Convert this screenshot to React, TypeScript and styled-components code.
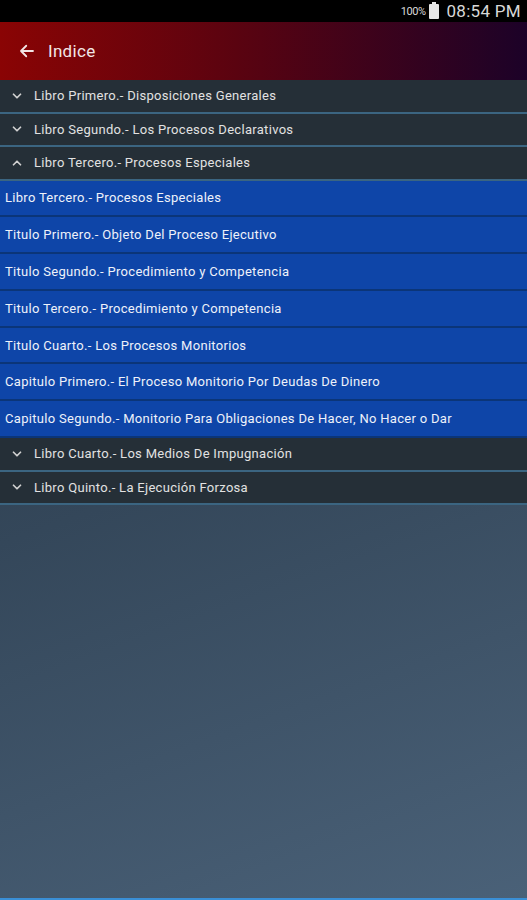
import React from 'react';
import styled, { createGlobalStyle } from 'styled-components';

const GlobalStyle = createGlobalStyle`
  html, body {
    margin: 0;
    padding: 0;
  }
  body {
    font-family: Roboto, "Liberation Sans", sans-serif;
    background: #2a3946;
  }
`;

type Group = {
  title: string;
  open?: boolean;
  items?: string[];
};

const groups: Group[] = [
  { title: 'Libro Primero.- Disposiciones Generales' },
  { title: 'Libro Segundo.- Los Procesos Declarativos' },
  {
    title: 'Libro Tercero.- Procesos Especiales',
    open: true,
    items: [
      'Libro Tercero.- Procesos Especiales',
      'Titulo Primero.- Objeto Del Proceso Ejecutivo',
      'Titulo Segundo.- Procedimiento y Competencia',
      'Titulo Tercero.- Procedimiento y Competencia',
      'Titulo Cuarto.- Los Procesos Monitorios',
      'Capitulo Primero.- El Proceso Monitorio Por Deudas De Dinero',
      'Capitulo Segundo.- Monitorio Para Obligaciones De Hacer, No Hacer o Dar',
    ],
  },
  { title: 'Libro Cuarto.- Los Medios De Impugnación' },
  { title: 'Libro Quinto.- La Ejecución Forzosa' },
];

const Screen = styled.div`
  width: 527px;
  height: 900px;
  display: flex;
  flex-direction: column;
  background: linear-gradient(160deg, #25323e 0%, #34475a 50%, #4a6178 100%);
  border-bottom: 2px solid #3a8fd6;
  box-sizing: border-box;
  overflow: hidden;
`;

const StatusBar = styled.div`
  height: 22px;
  flex-shrink: 0;
  background: #000;
  display: flex;
  justify-content: flex-end;
  align-items: center;
  gap: 4px;
  padding-right: 6px;
  color: #d8d8d8;
`;

const Battery = styled.span`
  width: 10px;
  height: 15px;
  background: #e6e6e6;
  border-radius: 1px;
  position: relative;
  margin-right: 3px;
  &::before {
    content: '';
    position: absolute;
    top: -2px;
    left: 3px;
    width: 4px;
    height: 2px;
    background: #e6e6e6;
  }
`;

const Percent = styled.span`
  font-size: 11px;
  letter-spacing: -0.5px;
`;

const Clock = styled.span`
  font-size: 17px;
  letter-spacing: 0.3px;
`;

const Header = styled.div`
  height: 58px;
  flex-shrink: 0;
  background: linear-gradient(90deg, #8a0404 0%, #5a0310 45%, #1c0228 100%);
  display: flex;
  align-items: center;
  padding-left: 18px;
  gap: 12px;
  color: #f2e6e6;
  box-shadow: 0 1px 2px rgba(0, 0, 0, 0.5);
`;

const Title = styled.span`
  font-size: 17px;
  letter-spacing: 0.3px;
`;

const GroupRow = styled.div`
  height: 31.5px;
  flex-shrink: 0;
  display: flex;
  align-items: center;
  gap: 10px;
  padding-left: 10px;
  background: #252f37;
  border-bottom: 2px solid #3b6581;
  color: #e2e2e2;
  font-size: 13px;
  letter-spacing: 0.3px;
`;

const ItemRow = styled.div`
  height: 34.8px;
  flex-shrink: 0;
  display: flex;
  align-items: center;
  padding-left: 5px;
  background: #0e45a8;
  border-bottom: 2px solid #0b3578;
  color: #eef2fa;
  font-size: 13px;
  letter-spacing: 0.3px;
`;

const Chevron: React.FC<{ up?: boolean }> = ({ up }) => (
  <svg width="14" height="14" viewBox="0 0 24 24" fill="none" stroke="#d0d0d0" strokeWidth="3" strokeLinecap="round" strokeLinejoin="round">
    {up ? <path d="M6 15l6-6 6 6" /> : <path d="M6 9l6 6 6-6" />}
  </svg>
);

const BackArrow = () => (
  <svg width="18" height="18" viewBox="0 0 24 24" fill="none" stroke="#f2e6e6" strokeWidth="2.4" strokeLinecap="round" strokeLinejoin="round">
    <path d="M20 12H4M11 5l-7 7 7 7" />
  </svg>
);

const App: React.FC = () => {
  return (
    <>
      <GlobalStyle />
      <Screen>
        <StatusBar>
          <Percent>100%</Percent>
          <Battery />
          <Clock>08:54 PM</Clock>
        </StatusBar>
        <Header>
          <BackArrow />
          <Title>Indice</Title>
        </Header>
        {groups.map((g) => (
          <React.Fragment key={g.title}>
            <GroupRow>
              <Chevron up={g.open} />
              <span>{g.title}</span>
            </GroupRow>
            {g.open && g.items?.map((it) => <ItemRow key={it}>{it}</ItemRow>)}
          </React.Fragment>
        ))}
      </Screen>
    </>
  );
};

export default App;
